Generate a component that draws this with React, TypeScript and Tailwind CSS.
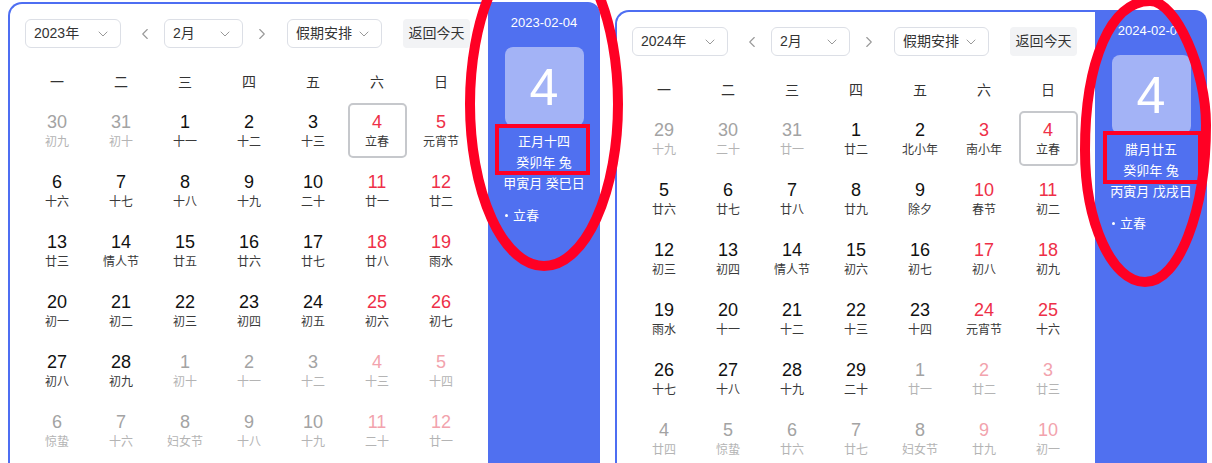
import { ChevronDown, ChevronLeft, ChevronRight } from 'lucide-react';

type Kind = 'n' | 'r' | 'g' | 'lr';
type Day = [number, string, Kind];

const feb2023: Day[] = [
  [30, '初九', 'g'], [31, '初十', 'g'], [1, '十一', 'n'], [2, '十二', 'n'], [3, '十三', 'n'], [4, '立春', 'r'], [5, '元宵节', 'r'],
  [6, '十六', 'n'], [7, '十七', 'n'], [8, '十八', 'n'], [9, '十九', 'n'], [10, '二十', 'n'], [11, '廿一', 'r'], [12, '廿二', 'r'],
  [13, '廿三', 'n'], [14, '情人节', 'n'], [15, '廿五', 'n'], [16, '廿六', 'n'], [17, '廿七', 'n'], [18, '廿八', 'r'], [19, '雨水', 'r'],
  [20, '初一', 'n'], [21, '初二', 'n'], [22, '初三', 'n'], [23, '初四', 'n'], [24, '初五', 'n'], [25, '初六', 'r'], [26, '初七', 'r'],
  [27, '初八', 'n'], [28, '初九', 'n'], [1, '初十', 'g'], [2, '十一', 'g'], [3, '十二', 'g'], [4, '十三', 'lr'], [5, '十四', 'lr'],
  [6, '惊蛰', 'g'], [7, '十六', 'g'], [8, '妇女节', 'g'], [9, '十八', 'g'], [10, '十九', 'g'], [11, '二十', 'lr'], [12, '廿一', 'lr'],
];

const feb2024: Day[] = [
  [29, '十九', 'g'], [30, '二十', 'g'], [31, '廿一', 'g'], [1, '廿二', 'n'], [2, '北小年', 'n'], [3, '南小年', 'r'], [4, '立春', 'r'],
  [5, '廿六', 'n'], [6, '廿七', 'n'], [7, '廿八', 'n'], [8, '廿九', 'n'], [9, '除夕', 'n'], [10, '春节', 'r'], [11, '初二', 'r'],
  [12, '初三', 'n'], [13, '初四', 'n'], [14, '情人节', 'n'], [15, '初六', 'n'], [16, '初七', 'n'], [17, '初八', 'r'], [18, '初九', 'r'],
  [19, '雨水', 'n'], [20, '十一', 'n'], [21, '十二', 'n'], [22, '十三', 'n'], [23, '十四', 'n'], [24, '元宵节', 'r'], [25, '十六', 'r'],
  [26, '十七', 'n'], [27, '十八', 'n'], [28, '十九', 'n'], [29, '二十', 'n'], [1, '廿一', 'g'], [2, '廿二', 'lr'], [3, '廿三', 'lr'],
  [4, '廿四', 'g'], [5, '惊蛰', 'g'], [6, '廿六', 'g'], [7, '廿七', 'g'], [8, '妇女节', 'g'], [9, '廿九', 'lr'], [10, '初一', 'lr'],
];

const weekdays = ['一', '二', '三', '四', '五', '六', '日'];

const numColor: Record<Kind, string> = {
  n: 'text-[#111111]',
  r: 'text-[#ee2f48]',
  g: 'text-[#a3a3a3]',
  lr: 'text-[#f2a3ad]',
};

const lunarColor: Record<Kind, string> = {
  n: 'text-[#3a3a3a]',
  r: 'text-[#3a3a3a]',
  g: 'text-[#b4b4b4]',
  lr: 'text-[#b4b4b4]',
};

function Select({ label, width }: { label: string; width: string }) {
  return (
    <div className={`${width} h-[29px] flex items-center justify-between pl-[8px] pr-[9px] border border-[#dcdfe6] rounded-[6px] bg-white text-[14px] text-[#333]`}>
      <span>{label}</span>
      <ChevronDown className="w-[16px] h-[16px] text-[#999]" strokeWidth={1.5} />
    </div>
  );
}

function Calendar({ year, days, selected, date, lunar, ganzhi }: {
  year: string;
  days: Day[];
  selected: number;
  date: string;
  lunar: string;
  ganzhi: string;
}) {
  return (
    <div className="flex w-[592px] h-[480px] shrink-0">
      <div className="w-[480px] border-l-2 border-t-2 border-[#4e6ef2] rounded-tl-[14px] bg-white pl-[15px] pt-[15px]">
        <div className="flex items-center h-[29px]">
          <Select label={year} width="w-[96px]" />
          <ChevronLeft className="ml-[15px] w-[18px] h-[18px] text-[#999]" strokeWidth={1.5} />
          <div className="ml-[10px]">
            <Select label="2月" width="w-[79px]" />
          </div>
          <ChevronRight className="ml-[10px] w-[18px] h-[18px] text-[#999]" strokeWidth={1.5} />
          <div className="ml-[16px]">
            <Select label="假期安排" width="w-[95px]" />
          </div>
          <div className="ml-[21px] w-[67px] h-[29px] flex items-center justify-center rounded-[4px] bg-[#f2f3f5] text-[14px] text-[#333]">
            返回今天
          </div>
        </div>
        <div className="mt-[16px] grid grid-cols-7 w-[448px] h-[36px] items-center text-[14px] text-[#333]">
          {weekdays.map((w) => (
            <div key={w} className="text-center">{w}</div>
          ))}
        </div>
        <div className="grid grid-cols-7 w-[448px]">
          {days.map(([n, l, k], i) => (
            <div key={i} className="h-[60px] flex items-center justify-center">
              <div
                className={`w-[59px] h-[55px] flex flex-col items-center justify-center rounded-[5px] ${
                  i === selected ? 'border-2 border-[#c6c8cc]' : ''
                }`}
              >
                <span className={`text-[18px] leading-[22px] ${numColor[k]}`}>{n}</span>
                <span className={`mt-[1px] text-[12px] leading-[16px] ${lunarColor[k]}`}>{l}</span>
              </div>
            </div>
          ))}
        </div>
      </div>
      <div className="w-[112px] bg-[#5070f0] rounded-tr-[12px] flex flex-col text-white">
        <div className="mt-[12px] text-center text-[13px] leading-[18px]">{date}</div>
        <div className="mt-[15px] mx-auto w-[79px] h-[79px] rounded-[8px] bg-[#a3b3f6] flex items-center justify-center text-[52px] leading-none">
          4
        </div>
        <div className="mt-[5px] text-center text-[13px] leading-[21px]">
          <div>{lunar}</div>
          <div>癸卯年 兔</div>
          <div>{ganzhi}</div>
        </div>
        <div className="mt-[11px] pl-[17px] flex items-center text-[13px] leading-[21px]">
          <span className="w-[3px] h-[3px] rounded-full bg-white mr-[5px]" />
          立春
        </div>
      </div>
    </div>
  );
}

export default function App() {
  return (
    <div
      className="relative w-[1212px] h-[463px] overflow-hidden bg-white flex"
      style={{ fontFamily: '"Liberation Sans", "Noto Sans CJK SC", sans-serif' }}
    >
      <div className="ml-[8px] mt-[2px]">
        <Calendar year="2023年" days={feb2023} selected={5} date="2023-02-04" lunar="正月十四" ganzhi="甲寅月 癸巳日" />
      </div>
      <div className="ml-[15px] mt-[10px]">
        <Calendar year="2024年" days={feb2024} selected={6} date="2024-02-04" lunar="腊月廿五" ganzhi="丙寅月 戊戌日" />
      </div>
      {/* red hand-drawn annotations over the screenshot */}
      <svg className="absolute inset-0 pointer-events-none" width="1212" height="463" viewBox="0 0 1212 463">
        <g fill="none" stroke="#ff0024">
          <ellipse cx="544" cy="104" rx="74" ry="162" strokeWidth="10" />
          <rect x="497" y="126" width="91" height="47" strokeWidth="4" />
          <path
            d="M1150 1 C1176 1 1206 70 1206 125 C1206 211 1179 282 1145 282 C1112 282 1085 223 1085 150 C1085 61 1111 1 1150 1 Z"
            strokeWidth="10"
          />
          <rect x="1105" y="133" width="95" height="49" strokeWidth="4" />
        </g>
      </svg>
    </div>
  );
}
